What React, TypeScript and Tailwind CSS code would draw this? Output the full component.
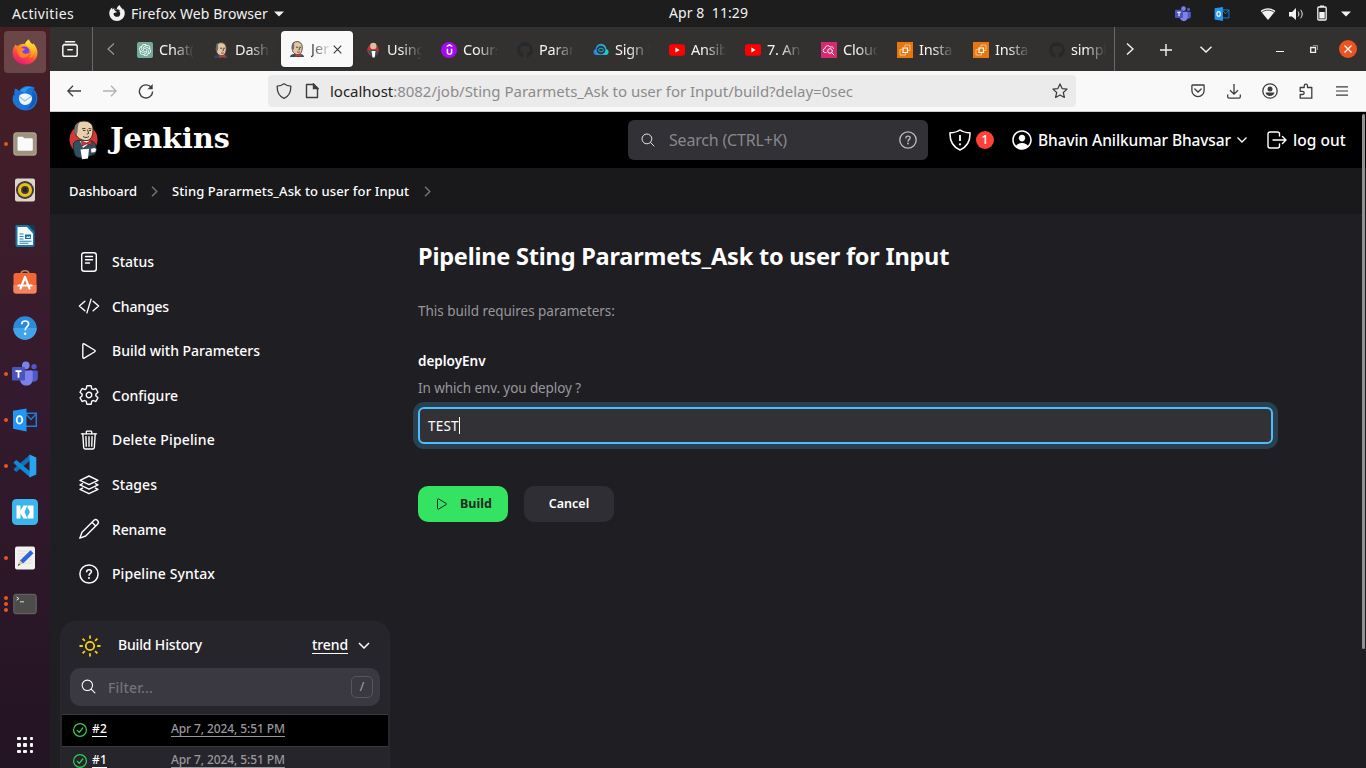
import type { ReactNode } from "react";
import { FaGithub } from "react-icons/fa";
import { SiOpenai, SiUdemy, SiFirefoxbrowser } from "react-icons/si";
import {
  IoCodeSlashOutline,
  IoPlayOutline,
  IoSettingsOutline,
  IoTrashOutline,
  IoPersonCircleOutline,
  IoSearchOutline,
} from "react-icons/io5";

/* ---------- shared drawings ---------- */

function JenkinsHead() {
  return (
    <svg viewBox="0 0 16 16" className="size-4 shrink-0">
      <path d="M1 16c0-2 2-3 4-3h6c2 0 4 1 4 3z" fill="#2f4a5c" />
      <path d="M3.200 5C3.400 2 5.600.6 8.200.6s4.800 1.800 5 5c.2 3.600-.8 7.600-4 8.100C6 14 3.600 11.500 3.300 8.500z" fill="#e3c6a4" stroke="#4a3a33" strokeWidth=".9" />
      <path d="M3 4.500C3 2.500 4 1.300 5.500.8c-.6 2-.3 3.800-.3 5.700L4.500 9 2.500 7.500z" fill="#6d6b6d" />
      <path d="M7 6.200h2M10.200 6.200H12M10 6.500l.6 2-1.200.4M8 10.800c1 .6 2 .5 2.800 0" stroke="#4a3a33" strokeWidth=".9" fill="none" />
      <path d="M6.500 12.800l2.800 1.200 3-1.400v3.200l-3-1-2.800 1.100z" fill="#d33833" />
    </svg>
  );
}

function JenkinsLogo() {
  return (
    <svg viewBox="0 0 30 40" className="h-10 w-[30px] shrink-0">
      <ellipse cx="14.500" cy="19.500" rx="14" ry="14.500" fill="#d33833" />
      <path d="M4.500 23c2-2.500 5-3 8-2.500l6 1c4-1 7 0 8 3l1 5-2 5-11 3.500c-3 0-6-.5-8-2C4.500 32 4 27 4.500 23z" fill="#335061" stroke="#16242d" strokeWidth=".8" />
      <path d="M11 21l3 7 4-3 3-4-3-.5z" fill="#f4f4f4" />
      <path d="M6 9C6 4 10 1 15 1s9 3 9 8-.8 10.500-6 11.500C12.500 21 7 17.500 6 12z" fill="#e9cfae" stroke="#2b211d" strokeWidth=".9" />
      <path d="M5.500 9C5.500 5 8 3 10.500 2 8.500 5 9 8 8.500 12L7.500 15.500 5 12z" fill="#77706c" />
      <path d="M13 8.800l3.500-.4M19.500 8.500l3 .4M18.500 9.500l1.200 4-2 .6M14 16.500c2 1.300 4 1.300 6 0M14 10.500h2.500M20 10.500h2" stroke="#3a2a22" strokeWidth=".9" fill="none" />
      <path d="M12.500 21l5 2 5-2.500.5 5-5-1.800-5 2.300z" fill="#d33833" stroke="#5c1310" strokeWidth=".6" />
      <path d="M11.500 29.500l8.500-.8-1 9.800-5.900.7z" fill="#fff" />
      <path d="M21.500 28.500l4.500-1 1.500 2-1 3-4.500.5z" fill="#fff" stroke="#222" strokeWidth=".6" />
    </svg>
  );
}

function Teams({ className }: { className: string }) {
  return (
    <svg viewBox="0 0 26 26" className={className}>
      <circle cx="22" cy="5.600" r="2.700" fill="#5059c9" />
      <path d="M17 9.500h7.500c.8 0 1.300.6 1.300 1.300v6c0 2.400-1.800 4-4 4-2 0-3.800-1.300-4.300-3.200z" fill="#5059c9" />
      <circle cx="13.800" cy="4.400" r="3.800" fill="#7b83eb" />
      <path d="M8 9.500h11.300c.8 0 1.400.6 1.400 1.400v7.500c0 3.500-2.900 6.200-6.300 6.200S8 21.900 8 18.400z" fill="#7b83eb" />
      <rect x="0" y="6" width="13" height="13.500" rx="1.200" fill="#4b53bc" />
      <path d="M3.500 9.200h6v1.700H7.400v5.800H5.600v-5.800H3.500z" fill="#fff" />
    </svg>
  );
}

function Outlook({ className }: { className: string }) {
  return (
    <svg viewBox="0 0 26 26" className={className}>
      <path d="M13 6.300h11.300v13H13" fill="none" stroke="#1b7fdc" strokeWidth="1.500" />
      <path d="M14 7l5 5.500L24.500 6.500" fill="none" stroke="#1b7fdc" strokeWidth="1.500" />
      <path d="M1 3.800L14.500 1.500v23L1 21.800z" fill="#2196f3" />
      <ellipse cx="7.500" cy="12.900" rx="2.800" ry="3.700" fill="none" stroke="#fff" strokeWidth="1.800" />
    </svg>
  );
}

/* ---------- top panel ---------- */

function TopPanel() {
  return (
    <header className="flex h-[27px] shrink-0 items-center bg-[#1d1d1d] text-[14px] leading-[27px] text-[#f2f2f2]">
      <div className="flex w-[643px] items-center pl-3">
        <span className="w-[97px] tracking-[0.37px]">Activities</span>
        <SiFirefoxbrowser className="mb-px size-4 shrink-0" />
        <span className="ml-[6px] tracking-[0.08px]">Firefox Web Browser</span>
        <svg viewBox="0 0 10 6" className="ml-[6px] h-[6px] w-[10px]"><path d="M0 .5h10L5 5.500z" fill="currentColor" /></svg>
      </div>
      <span className="mb-[2px] whitespace-pre pl-[26px] tracking-[0.08px]">Apr 8{"  "}11:29</span>
      <div className="ml-auto flex items-center pr-[15px]">
        <Teams className="mr-[23px] size-4" />
        <Outlook className="mr-[30px] size-4" />
        <svg viewBox="0 0 16 14" className="mr-[12px] h-[14px] w-4"><path d="M.6 4C4.800.4 11.200.4 15.400 4L8 13z" fill="currentColor" /><path d="M1.800 5.300C5.500 2.400 10.500 2.400 14.200 5.300" stroke="#1d1d1d" strokeWidth=".8" fill="none" /></svg>
        <svg viewBox="0 0 16 14" className="mr-[12px] h-[14px] w-4"><path d="M1 5h3l4-4v12L4 9.500H1z" fill="currentColor" /><path d="M10 4.500c1.200 1.500 1.200 3.500 0 5M12.500 2.800c2.200 2.500 2.200 6 0 8.500" stroke="currentColor" strokeWidth="1" fill="none" /></svg>
        <svg viewBox="0 0 12 16" className="mr-[13px] mb-px h-4 w-3"><path d="M4 .5h4V2H4z" fill="currentColor" /><rect x="1.800" y="2" width="8.400" height="13" rx="1" fill="none" stroke="currentColor" strokeWidth="1.300" /><path d="M3.300 7h5.400v6.500H3.300z" fill="currentColor" /></svg>
        <svg viewBox="0 0 10 6" className="h-[6px] w-[10px]"><path d="M0 .5h10L5 5.500z" fill="currentColor" /></svg>
      </div>
    </header>
  );
}

/* ---------- dock ---------- */

function FirefoxIcon() {
  return (
    <svg viewBox="0 0 26 26" className="size-[26px]">
      <defs>
        <linearGradient id="ff" x1=".8" y1="0" x2=".3" y2="1">
          <stop offset="0" stopColor="#fff44f" /><stop offset=".35" stopColor="#ffa21f" /><stop offset=".65" stopColor="#ff4a3d" /><stop offset="1" stopColor="#e31587" />
        </linearGradient>
        <linearGradient id="fy" x1="0" y1="0" x2="0" y2="1"><stop offset="0" stopColor="#ffee3a" /><stop offset="1" stopColor="#ff8a16" /></linearGradient>
      </defs>
      <path d="M3.500 5.500c.8 1 1.600 1.300 2.500 1.400C8 5.200 11 4.500 13 5c.8-2.200 2.500-3.800 4-4.500.2 2.200 1.500 3 3.500 5 .4-.3.500-1 .4-1.500 3 3 4.600 6.500 4.600 9.700C25.500 20.600 20 25.500 13 25.500S.5 20 .5 13.500c0-3 1.300-6 3-8z" fill="url(#ff)" />
      <path d="M17 .5c.2 2.200 1.500 3 3.500 5 2.500 2.800 3 7 1.500 10-1.500 2.700-4 3.500-5 3.500 3-3 3-7.500.5-10-1.200-1.300-3-2.800-4.500-4 .8-2.200 2.500-3.800 4-4.500z" fill="url(#fy)" />
      <circle cx="12.500" cy="12.500" r="5" fill="#7542e5" />
      <path d="M5.500 9c1.500-1.500 4-.8 5 .3l2.500.5c-.3 1.600-1.700 1.800-2.700 2.300 0 2 1.700 3 3.800 2.700 1.700-.3 2.600-1 3.400-1-1 4-4.500 5.500-7.500 4.700C6.500 17.500 4.500 13 5.500 9z" fill="#ff8426" />
    </svg>
  );
}

function ThunderbirdIcon() {
  return (
    <svg viewBox="0 0 26 26" className="size-[26px]">
      <path d="M3 3.500c2 .5 3 1.300 4 2.500 3-4.500 8-6 12.500-4.500 2 .2 3 1 3.500 2-1 0-1.500.3-1.500.8 3.500 3 4.500 8 3.500 12C23.500 22.500 18.500 25.500 13.500 25.500S2 21.500.8 16C.3 13 1 10.500 1.500 9c0 1 .5 1.500 1 1.800C2.200 8.500 2.200 6.500 3 3.500z" fill="#1a73d9" />
      <path d="M8 6c3-4 8-5 12-3.500-4 .3-6 2.500-7 5z" fill="#2f97ee" />
      <path d="M20 5.500c4 3 5 7 3.500 11-1 4-5 7-9.500 7.500 6-3 8-11 6-18.500z" fill="#0b3f9c" opacity=".5" />
      <path d="M7 12c0-2 3-3.500 6-3.500s7 1.500 7 4.500c0 4-3 7-7 7s-6.500-4-6-8z" fill="#eef5fb" />
      <path d="M7.300 11.500l5.500 4.500 6.500-4.500" fill="none" stroke="#9dc1e4" strokeWidth="1.200" />
    </svg>
  );
}

const dock: { dots: number; active?: boolean; icon: ReactNode }[] = [
  { dots: 1, active: true, icon: <FirefoxIcon /> },
  { dots: 0, icon: <ThunderbirdIcon /> },
  {
    dots: 1,
    icon: <svg viewBox="0 0 24 24" className="size-6"><rect x=".5" y=".5" width="23" height="23" rx="2.500" fill="#9d937f" /><rect x=".9" y=".9" width="22.200" height="22.200" rx="2.200" fill="none" stroke="#b8af9d" strokeWidth=".8" /><path d="M4.500 6c0-.8.5-1.300 1.300-1.300h4l1.500 1.500h7.200c.8 0 1.300.5 1.300 1.300v10c0 .8-.5 1.300-1.300 1.300H5.800c-.8 0-1.300-.5-1.300-1.300z" fill="#fafafa" /></svg>,
  },
  {
    dots: 0,
    icon: <svg viewBox="0 0 24 24" className="size-6"><rect x="2" y=".5" width="20" height="23" rx="2" fill="#dcd5c9" /><circle cx="12" cy="12" r="9" fill="#3d3a38" /><circle cx="12" cy="12" r="5.500" fill="none" stroke="#e9bd1e" strokeWidth="3.200" /><circle cx="12" cy="12" r="2.200" fill="#272523" /></svg>,
  },
  {
    dots: 0,
    icon: <svg viewBox="0 0 24 24" className="size-6"><path d="M3.500 1H17l4.500 4.500V21a2 2 0 0 1-2 2h-15a2 2 0 0 1-2-2V2a1 1 0 0 1 1-1z" fill="#1876a8" /><path d="M4.500 3H14l6 6.500V21h-15.500z" fill="#f5fafc" /><path d="M15 1h6.500v7z" fill="#0c3f5c" /><path d="M6.500 10h4M6.500 12.500h4M6.500 15h4M6.500 17.200h12M6.500 19.300h9" stroke="#2183b5" strokeWidth="1.100" /><path d="M12 10.500h6v4.500H12z" fill="#1d6c98" /><path d="M13 14l1.500-2 1.200 1 1-1 .8 2z" fill="#d9edf7" /></svg>,
  },
  {
    dots: 0,
    icon: <svg viewBox="0 0 24 24" className="size-6"><path d="M8 4.500C8 2 9.500.8 12 .8s4 1.200 4 3.700" fill="none" stroke="#b78b68" strokeWidth="1.500" /><rect x=".5" y="3" width="23" height="20.500" rx="2.500" fill="#f26534" /><path d="M.5 15h23v6a2.500 2.500 0 0 1-2.500 2.500H3A2.500 2.500 0 0 1 .5 21z" fill="#f3835c" /><path d="M7.500 18.500L12 7l4.500 11.500M5.500 15.500h13" fill="none" stroke="#fff" strokeWidth="2.200" strokeLinejoin="round" strokeLinecap="round" /></svg>,
  },
  {
    dots: 0,
    icon: <svg viewBox="0 0 24 24" className="size-6"><circle cx="12" cy="12" r="11.700" fill="#2a8bdc" /><path d="M.3 12h23.400a11.700 11.700 0 0 1-23.400 0z" fill="#42a3e8" /><path d="M8.700 8.200C8.800 6.200 10.200 5 12.200 5s3.400 1.200 3.400 3c0 2.600-3.400 2.900-3.400 6.200" fill="none" stroke="#fff" strokeWidth="1.700" /><circle cx="12.100" cy="17.800" r="1.300" fill="#fff" /></svg>,
  },
  { dots: 1, icon: <Teams className="size-[26px]" /> },
  { dots: 1, icon: <Outlook className="size-[26px]" /> },
  {
    dots: 1,
    icon: <svg viewBox="0 0 24 24" className="size-6"><path d="M17 .8v6L3.300 18 .8 16V14.800z" fill="#0f72b8" /><path d="M17 23.200v-6L3.300 6 .8 8v1.200z" fill="#0f8ad6" /><path d="M16.500.6L23.300 3.500v17l-6.800 2.900z" fill="#2ba4ee" /></svg>,
  },
  {
    dots: 0,
    icon: <svg viewBox="0 0 26 26" className="size-[26px]"><rect width="26" height="26" rx="4.500" fill="#3bb5ea" /><path d="M4.500 6.500h4v5l3-5h4l-3 6.500 3 6.500h-4l-3-5v5h-4z" fill="#fff" /><path d="M16 6.500h5.500v13H16l-.8-1.500 2.800-5-2.800-5z" fill="#fff" /></svg>,
  },
  {
    dots: 1,
    icon: <svg viewBox="0 0 24 24" className="size-6"><rect x="2" y=".5" width="20" height="23" rx="2" fill="#f1f1f0" /><path d="M5 5h14M5 8h14M5 11h14M5 14h14M5 17h14" stroke="#dcdcdc" strokeWidth=".8" /><path d="M17.500 4.300l3 3L10 17.600l-3-3z" fill="#2f63dc" /><path d="M7 14.600l3 3-5.200 2.300z" fill="#e9c08c" /><path d="M4.800 19.900l1-2.300 1.200 1.200z" fill="#333" /></svg>,
  },
  {
    dots: 3,
    icon: <svg viewBox="0 0 24 24" className="size-6"><rect x=".8" y="2.300" width="22.400" height="19.400" rx="2" fill="#4c4c4b" stroke="#6a6a68" /><path d="M3.500 5l2.500 1.600-2.500 1.600M7 9.800h4" fill="none" stroke="#ddd" strokeWidth="1" /></svg>,
  },
];

function Dock() {
  return (
    <nav className="flex w-[50px] shrink-0 flex-col bg-linear-to-b from-[#471f25] via-[#341a2e] via-50% to-[#231423] pt-[2px]">
      {dock.map((d, i) => (
        <div key={i} className="flex h-[46px] items-center">
          <div className="flex w-[4px] flex-col items-end gap-[2px] overflow-visible">
            {Array.from({ length: d.dots }, (_, k) => (
              <span key={k} className="-mr-[4px] size-1 shrink-0 rounded-full bg-[#e95420]" />
            ))}
          </div>
          <div className={d.active ? "flex size-[42px] items-center justify-center rounded-[4px] bg-[#6b4649]" : "flex size-[42px] items-center justify-center"}>
            {d.icon}
          </div>
        </div>
      ))}
      <div className="mt-auto mb-[15px] ml-[17px] grid w-4 grid-cols-3 gap-[3px]">
        {Array.from({ length: 9 }, (_, k) => (
          <span key={k} className="size-[3.500px] rounded-[1px] bg-[#f5f5f5]" />
        ))}
      </div>
    </nav>
  );
}

/* ---------- browser chrome ---------- */

const githubIcon = <FaGithub className="size-4 shrink-0 text-[#24292e]" />;
const youtubeIcon = (
  <svg viewBox="0 0 16 16" className="size-4 shrink-0"><rect y="2.300" width="16" height="11.400" rx="2.600" fill="#f00" /><path d="M6.400 5.600v4.800L10.600 8z" fill="#fff" /></svg>
);
const ec2Icon = (
  <svg viewBox="0 0 16 16" className="size-4 shrink-0"><path d="M0 0h16v16H0z" fill="#e8760f" /><path d="M6 6h4.500v4.500H6z" fill="none" stroke="#fff" strokeWidth="1.200" /><path d="M5 7.500H3v5.500h5.500v-2M8 5V3h5v5.500h-2" fill="none" stroke="#fbd3a5" strokeWidth=".8" /></svg>
);

const tabs: { label: string; icon: ReactNode }[] = [
  { label: "Chat(", icon: <span className="flex size-4 shrink-0 items-center justify-center rounded-[2px] bg-[#74aa9c]"><SiOpenai className="size-3 text-white" /></span> },
  { label: "Dash", icon: <JenkinsHead /> },
  { label: "Jer", icon: <JenkinsHead /> },
  {
    label: "Using",
    icon: <svg viewBox="0 0 16 16" className="size-4 shrink-0"><ellipse cx="8" cy="8" rx="5.800" ry="6" fill="#c9302c" /><path d="M3 8.500l4-.5 5 .5 1 4-3 2H6z" fill="#335061" /><circle cx="8.300" cy="4" r="3.200" fill="#d9bfa3" /><path d="M6.500 9h4l-.8 6.500H7.500z" fill="#fff" /></svg>,
  },
  { label: "Cours", icon: <span className="flex size-4 shrink-0 items-center justify-center rounded-full bg-[#a908f2]"><SiUdemy className="size-[11px] text-white" /></span> },
  { label: "Param", icon: githubIcon },
  {
    label: "Sign I",
    icon: <svg viewBox="0 0 16 16" className="size-4 shrink-0"><defs><linearGradient id="cl"><stop stopColor="#2b7de0" /><stop offset="1" stopColor="#1fd3c9" /></linearGradient></defs><path d="M3 13a3 3 0 0 1-.3-5.900 5.300 5.300 0 0 1 10.600 0A3 3 0 0 1 13 13z" fill="url(#cl)" /><circle cx="8" cy="8" r="4.300" fill="#263746" /><ellipse cx="8" cy="8" rx="2.400" ry="1.800" fill="none" stroke="#27b5c9" strokeWidth=".9" /></svg>,
  },
  { label: "Ansib", icon: youtubeIcon },
  { label: "7. An", icon: youtubeIcon },
  {
    label: "Cloud",
    icon: <svg viewBox="0 0 16 16" className="size-4 shrink-0"><path d="M0 0h16v16H0z" fill="#d62a70" /><path d="M5.500 10.500H4.300a2 2 0 0 1-.3-4 2.800 2.800 0 0 1 5.300-1.300 2 2 0 0 1 3.200 1.600" fill="none" stroke="#fff" strokeWidth=".9" /><circle cx="9" cy="9" r="2.300" fill="none" stroke="#fff" strokeWidth="1" /><path d="M10.700 10.700l2.500 2.500" stroke="#fff" /></svg>,
  },
  { label: "Insta", icon: ec2Icon },
  { label: "Insta", icon: ec2Icon },
  { label: "simpl", icon: githubIcon },
];

function TabBar() {
  return (
    <div className="flex h-11 shrink-0 items-center bg-[#333030] text-[14.500px] text-[#f4f4f4]">
      <div className="flex h-full w-[43px] items-center border-r border-[#6a6868] pl-[12px]">
        <svg viewBox="0 0 16 16" className="size-4" fill="none" stroke="currentColor" strokeWidth="1.500"><path d="M3.500.8h9" strokeLinecap="round" /><path d="M1.500 3.500h13" /><rect x=".8" y="3.800" width="14.400" height="11.400" rx="1.800" /><path d="M5.800 8.800h4.400" strokeLinecap="round" /></svg>
      </div>
      <div className="flex h-full w-9 items-center pl-[14px] text-[#9a9898]">
        <svg viewBox="0 0 8 12" className="h-3 w-2" fill="none" stroke="currentColor" strokeWidth="1.200"><path d="M7 .5L1 6l6 5.500" /></svg>
      </div>
      <div className="flex gap-1">
        {tabs.map((t, i) =>
          i === 2 ? (
            <div key={i} className="flex h-9 w-[72px] items-center rounded-[4px] bg-[#f9f9f9] pl-2 text-[#333] shadow">
              {t.icon}
              <span className="ml-[6px] w-[18px] overflow-hidden whitespace-nowrap mask-r-from-0% mask-r-to-110%">{t.label}</span>
              <svg viewBox="0 0 10 10" className="ml-[4px] size-[9px]" stroke="#333" strokeWidth="1.200"><path d="M.8.8l8.400 8.400M9.200.8L.8 9.200" /></svg>
            </div>
          ) : (
            <div key={i} className="flex h-9 w-[72px] items-center pt-px pl-2">
              {t.icon}
              <span className="ml-[6px] w-[35px] overflow-hidden whitespace-nowrap tracking-[-0.2px] mask-r-from-40% mask-r-to-100%">{t.label}</span>
            </div>
          ),
        )}
      </div>
      <div className="ml-px flex h-full flex-1 items-center border-l border-[#6a6868] pl-[11px]">
        <svg viewBox="0 0 8 12" className="h-3 w-2" fill="none" stroke="currentColor" strokeWidth="1.400"><path d="M1 .5L7 6l-6 5.500" /></svg>
        <svg viewBox="0 0 12 12" className="mt-px ml-[26px] size-3" stroke="currentColor" strokeWidth="1.400"><path d="M6 0v12M0 6h12" /></svg>
        <svg viewBox="0 0 12 7" className="ml-[28px] h-[7px] w-3" fill="none" stroke="currentColor" strokeWidth="1.400"><path d="M.5.7L6 6 11.500.7" /></svg>
        <span className="mt-[5px] ml-[64px] h-[1.500px] w-2 bg-[#f4f4f4]" />
        <svg viewBox="0 0 8 8" className="ml-[26px] size-2" fill="none" stroke="currentColor"><path d="M.7 2.500h4.800v4.800H.7z" strokeWidth="1.300" /><path d="M3 .5h4.500V5" strokeWidth=".8" opacity=".6" /></svg>
        <span className="ml-[21px] flex size-[18px] items-center justify-center rounded-full bg-[#e95420]">
          <svg viewBox="0 0 8 8" className="size-2" stroke="#fff" strokeWidth="1.200"><path d="M.5.5l7 7M7.500.5l-7 7" /></svg>
        </span>
      </div>
    </div>
  );
}

function UrlBar() {
  return (
    <div className="flex h-[41px] shrink-0 items-center border-b border-[#ccc] bg-[#f9f9f9] text-[#3d3c3f]">
      <svg viewBox="0 0 14 12" className="ml-[17px] h-3 w-[14px]" fill="none" stroke="currentColor" strokeWidth="1.300"><path d="M14 6H1M6 .7L.8 6 6 11.300" /></svg>
      <svg viewBox="0 0 14 12" className="ml-[22px] h-3 w-[14px] text-[#b0b0b0]" fill="none" stroke="currentColor" strokeWidth="1.300"><path d="M0 6h13M8 .7L13.200 6 8 11.300" /></svg>
      <svg viewBox="0 0 16 16" className="ml-[21px] size-4" fill="none" stroke="currentColor" strokeWidth="1.400"><path d="M13.300 4.500A6.600 6.600 0 1 0 14.600 8.500" /><path d="M14.700 1v5.200H9.500z" fill="currentColor" stroke="none" /></svg>
      <div className="ml-[114px] flex h-8 w-[808px] items-center rounded-[4px] bg-[#ebebeb]">
        <svg viewBox="0 0 16 16" className="ml-2 size-4" fill="none" stroke="currentColor" strokeWidth="1.300"><path d="M8 .8c2 1.500 4 2.300 6.800 2.400C15 9 12.500 13.500 8 15.300 3.500 13.500 1 9 1.200 3.200 4 3.100 6 2.300 8 .8z" strokeLinejoin="round" /></svg>
        <svg viewBox="0 0 14 16" className="ml-[13px] h-4 w-[14px]" fill="none" stroke="currentColor" strokeWidth="1.400"><path d="M1.500 1.500h7l4 4v9h-11z" strokeLinejoin="round" /><path d="M8.500 1v4.500H13z" fill="currentColor" /></svg>
        <span className="ml-[11px] whitespace-nowrap text-[15px] tracking-[-0.021px] text-[#8b8b8b]">
          <span className="text-[#222]">localhost</span>:8082/job/Sting Pararmets_Ask to user for Input/build?delay=0sec
        </span>
        <svg viewBox="0 0 16 16" className="mr-2 ml-auto size-4" fill="none" stroke="currentColor" strokeWidth="1.200" strokeLinejoin="round"><path d="M8 .9l2.100 4.700 5 .5-3.800 3.400 1.100 5L8 12l-4.400 2.500 1.100-5L.9 6.100l5-.5z" /></svg>
      </div>
      <svg viewBox="0 0 14 14" className="ml-[115px] size-[14px]" fill="none" stroke="currentColor" strokeWidth="1.300"><path d="M1.500 1h11c.3 0 .6.3.6.6V6.500a6.100 6.100 0 0 1-12.200 0V1.600c0-.3.3-.6.6-.6z" /><path d="M3.800 5L7 8l3.200-3" strokeLinecap="round" /></svg>
      <svg viewBox="0 0 14 15" className="ml-[22px] h-[15px] w-[14px]" fill="none" stroke="currentColor" strokeWidth="1.300"><path d="M7 0v10M3 6.300L7 10.200l4-3.900M.7 10.500v2.200c0 .8.500 1.400 1.400 1.400h9.800c.9 0 1.400-.6 1.400-1.400v-2.200" /></svg>
      <svg viewBox="0 0 16 16" className="ml-[21px] size-4" fill="none" stroke="currentColor" strokeWidth="1.300"><circle cx="8" cy="8" r="7.200" /><circle cx="8" cy="5.900" r="2.500" fill="currentColor" stroke="none" /><path d="M3.500 9.500h9c-.4 2-2.300 3.500-4.500 3.500s-4.100-1.500-4.500-3.500z" fill="currentColor" stroke="none" /></svg>
      <svg viewBox="0 0 14 16" className="ml-[21px] h-4 w-[14px]" fill="none" stroke="currentColor" strokeWidth="1.300" strokeLinejoin="round"><path d="M1.200 15.200V11.500h2.300c2.200 0 2.200-3.200 0-3.200H1.200V4.500h4V3c0-2.400 3.300-2.400 3.300 0v1.500h4.300v10.700z" /></svg>
      <svg viewBox="0 0 12 10" className="ml-[23px] h-[10px] w-3" stroke="currentColor" strokeWidth="1.200"><path d="M0 .8h12M0 5h12M0 9.200h12" /></svg>
    </div>
  );
}

/* ---------- Jenkins page ---------- */

function HelpCircle({ className }: { className: string }) {
  return (
    <svg viewBox="0 0 20 20" className={className} fill="none" stroke="currentColor" strokeWidth="1.500">
      <circle cx="10" cy="10" r="9.100" />
      <path d="M7.700 7.700C7.700 6.400 8.700 5.700 10.100 5.700s2.300.8 2.300 2c0 1.600-2.300 1.700-2.300 3.600" strokeLinecap="round" />
      <circle cx="10" cy="13.900" r="1" fill="currentColor" stroke="none" />
    </svg>
  );
}

function JenkinsHeader() {
  return (
    <div className="flex h-14 shrink-0 items-center bg-black">
      <div className="ml-[19px] flex w-[559px] items-center">
        <JenkinsLogo />
        <span className="mb-[3px] ml-[11px] font-['DejaVu_Serif',serif] text-[28.500px] leading-none font-bold">Jenkins</span>
      </div>
      <div className="flex h-10 w-[300px] items-center rounded-[6px] bg-[#323136] px-[12px] text-[#88878c]">
        <IoSearchOutline className="size-4 text-[#e4e4e6]" />
        <span className="ml-[13px] text-[16px] tracking-[-0.19px]">Search (CTRL+K)</span>
        <HelpCircle className="-mr-px ml-auto size-[18px] text-[#b9b9bd]" />
      </div>
      <svg viewBox="0 0 22 22" className="ml-[21px] size-[22px]" fill="none" stroke="currentColor" strokeWidth="1.500" strokeLinejoin="round"><path d="M11 1c2.500 1.800 6 2.700 10 2.800C21.300 12 18 18 11 21 4 18 .7 12 1 3.800 5 3.700 8.500 2.800 11 1z" /><path d="M11 6v6" strokeWidth="1.800" /><circle cx="11" cy="15.300" r="1.100" fill="currentColor" stroke="none" /></svg>
      <span className="ml-[5px] flex size-[18px] items-center justify-center rounded-full bg-[#ff4137] text-[12px] font-medium">1</span>
      <IoPersonCircleOutline className="ml-4 size-6" />
      <span className="mt-px ml-[4px] text-[15.500px] font-medium tracking-[-0.1px] whitespace-nowrap">Bhavin Anilkumar Bhavsar</span>
      <svg viewBox="0 0 10 6" className="ml-[6px] h-[6px] w-[10px]" fill="none" stroke="currentColor" strokeWidth="1.300"><path d="M.5.5L5 5 9.500.5" /></svg>
      <svg viewBox="0 0 20 18" className="ml-5 h-[18px] w-5" fill="none" stroke="currentColor" strokeWidth="1.400" strokeLinecap="round" strokeLinejoin="round"><path d="M12.500 5V3c0-1.200-.8-2-2-2H3C1.800 1 1 1.800 1 3v12c0 1.200.8 2 2 2h7.500c1.200 0 2-.8 2-2v-2M6 9h13M15.500 5.500L19 9l-3.500 3.500" /></svg>
      <span className="mt-px ml-[6px] text-[15.500px] font-medium tracking-[0.04px] whitespace-nowrap">log out</span>
    </div>
  );
}

function Crumb() {
  return <svg viewBox="0 0 7 12" className="h-[11px] w-[7px]" fill="none" stroke="#77767a" strokeWidth="1.500"><path d="M.8.8L6 6 .8 11.200" /></svg>;
}

const menu: { label: string; track: string; icon: ReactNode }[] = [
  {
    label: "Status", track: "tracking-normal",
    icon: <svg viewBox="0 0 24 24" className="size-6" fill="none" stroke="currentColor" strokeWidth="1.400" strokeLinecap="round"><rect x="4.700" y="2.700" width="14.600" height="18.600" rx="2.500" /><path d="M8.500 6.500h7M8.500 9.700h7M8.500 13h4" /></svg>,
  },
  { label: "Changes", track: "tracking-[-0.14px]", icon: <IoCodeSlashOutline className="size-[22px]" /> },
  { label: "Build with Parameters", track: "tracking-[-0.01px]", icon: <IoPlayOutline className="size-[22px]" /> },
  { label: "Configure", track: "tracking-[-0.01px]", icon: <IoSettingsOutline className="size-[22px]" /> },
  { label: "Delete Pipeline", track: "tracking-[0.16px]", icon: <IoTrashOutline className="size-[22px]" /> },
  {
    label: "Stages", track: "tracking-[0.07px]",
    icon: <svg viewBox="0 0 24 24" className="size-6" fill="none" stroke="currentColor" strokeWidth="1.400" strokeLinejoin="round"><path d="M12 3l9 4.300-9 4.300-9-4.300z" /><path d="M6 10.300L3 11.900l9 4.300 9-4.300-3-1.600" /><path d="M6 14.800l-3 1.600 9 4.300 9-4.300-3-1.600" /></svg>,
  },
  {
    label: "Rename", track: "tracking-[-0.16px]",
    icon: <svg viewBox="0 0 24 24" className="size-6" fill="none" stroke="currentColor" strokeWidth="1.400" strokeLinejoin="round"><path d="M2.800 21.200L5 15.300 16.800 3.500a2.600 2.600 0 0 1 3.700 3.700L8.700 19z" /><path d="M15 5.300L18.700 9" /></svg>,
  },
  { label: "Pipeline Syntax", track: "tracking-[0.07px]", icon: <HelpCircle className="size-5" /> },
];

function BuildRow({ n, dark }: { n: string; dark?: boolean }) {
  return (
    <div className={dark ? "flex h-8 items-center border-t border-[#3a393f] bg-black pb-[2px] pl-[11px]" : "flex h-[31px] items-center border-t border-[#3a393f] pb-[4px] pl-[11px]"}>
      <svg viewBox="0 0 14 14" className="mt-[2px] size-[14px]" fill="none" stroke="#30d158" strokeWidth="1.200"><circle cx="7" cy="7" r="6.400" /><path d="M4.300 7.300l1.900 2L9.800 5" strokeLinecap="round" strokeLinejoin="round" /></svg>
      <span className="ml-[5px] flex w-[79px] text-[12px] font-medium tracking-[0.18px] text-white"><span className="border-b border-white leading-[15px]">{n}</span></span>
      <span className="border-b border-[#98979c] text-[12px] leading-[15px] font-medium tracking-[-0.1px] text-[#98979c]">Apr 7, 2024, 5:51 PM</span>
    </div>
  );
}

function Sidebar() {
  return (
    <aside className="flex w-[340px] shrink-0 flex-col pl-[10px]">
      <ul className="pt-[25.300px] pl-[17px]">
        {menu.map((m) => (
          <li key={m.label} className="flex h-[44.600px] items-center text-[14px] font-medium">
            <span className="flex w-6 justify-center">{m.icon}</span>
            <span className={`ml-[11px] ${m.track}`}>{m.label}</span>
          </li>
        ))}
      </ul>
      <section className="mt-[24.700px] h-[148px] shrink-0 overflow-hidden rounded-t-[16px] border border-b-0 border-[#29282d] bg-[#26252b]">
        <div className="flex h-[46px] items-center pl-[18px] text-[14px] font-medium">
          <svg viewBox="0 0 22 22" className="mt-[2px] size-[22px]" fill="none" stroke="#fbd00b" strokeWidth="1.800"><circle cx="11" cy="11" r="4.200" /><path d="M11 .5v3.300M11 18.200v3.300M.5 11h3.300M18.200 11h3.300M3.600 3.600l2.300 2.300M16.100 16.100l2.300 2.300M3.600 18.400l2.300-2.300M16.100 5.900l2.300-2.300" /></svg>
          <span className="ml-[17px] w-[194px] tracking-[-0.16px]">Build History</span>
          <span className="mt-[2px] border-b border-white leading-[16px] tracking-[-0.1px]">trend</span>
          <svg viewBox="0 0 12 7" className="mt-px ml-[10px] h-[7px] w-3" fill="none" stroke="currentColor" strokeWidth="1.500"><path d="M1 1l5 5 5-5" /></svg>
        </div>
        <div className="mx-[9px] flex h-[38px] items-center rounded-[10px] bg-[#3a3942] pr-[7px] pl-[10px]">
          <IoSearchOutline className="size-[17px]" />
          <span className="mt-px ml-[11px] text-[14px] font-medium tracking-[0.17px] text-[#737278]">Filter...</span>
          <span className="ml-auto flex h-[22px] w-[22px] items-center justify-center rounded-[5px] border border-[#57565e] text-[12px] text-[#a9a8ae]">/</span>
        </div>
        <div className="mx-px mt-[8px]">
          <BuildRow n="#2" dark />
          <BuildRow n="#1" />
        </div>
      </section>
    </aside>
  );
}

function BuildForm() {
  return (
    <main className="flex flex-col pl-7">
      <h1 className="mt-[26px] text-[23.500px] leading-8 font-bold tracking-[-0.21px]">Pipeline Sting Pararmets_Ask to user for Input</h1>
      <p className="mt-[29px] text-[13.500px] leading-5 tracking-[-0.03px] text-[#98979c]">This build requires parameters:</p>
      <label className="mt-[30px] text-[13.500px] leading-5 font-semibold">deployEnv</label>
      <p className="mt-[7px] text-[13.500px] leading-5 tracking-[-0.09px] text-[#98979c]">In which env. you deploy ?</p>
      <div className="mt-[9px] flex h-[37px] w-[855px] items-center rounded-[6px] border-2 border-[#4ebdfb] bg-[#323136] pl-2 ring-[5px] ring-[#294050]">
        <span className="mt-[2px] text-[13.500px] tracking-[0.2px]">TEST</span>
        <span className="h-[17px] w-px bg-white" />
      </div>
      <div className="mt-[42px] flex gap-4 text-[12.500px]">
        <button className="flex h-9 w-[90px] items-center rounded-[10px] bg-[#34e362] pl-[16px] font-bold text-[#1f2a24]">
          <IoPlayOutline className="size-4" />
          <span className="mt-px ml-[10px]">Build</span>
        </button>
        <button className="h-9 w-[90px] rounded-[10px] bg-[#2f2e34] pt-px font-semibold">Cancel</button>
      </div>
    </main>
  );
}

export default function App() {
  return (
    <div className="flex h-[768px] w-[1366px] flex-col overflow-hidden bg-[#1f1e23] font-['Noto_Sans','Open_Sans',sans-serif] text-white">
      <TopPanel />
      <div className="flex min-h-0 flex-1">
        <Dock />
        <div className="flex w-[1316px] flex-col">
          <TabBar />
          <UrlBar />
          <div className="relative flex min-h-0 flex-1 flex-col">
            <JenkinsHeader />
            <div className="flex h-[46px] shrink-0 items-center bg-[#19191b] pt-px pl-[19px] text-[13px] font-medium">
              <span className="tracking-[-0.02px]">Dashboard</span>
              <span className="mx-[14px]"><Crumb /></span>
              <span className="mr-[15px] tracking-[0.1px]">Sting Pararmets_Ask to user for Input</span>
              <Crumb />
            </div>
            <div className="flex min-h-0 flex-1">
              <Sidebar />
              <BuildForm />
            </div>
            <div className="absolute top-[2px] right-px h-[535px] w-[3px] rounded-full bg-[#929292]" />
          </div>
        </div>
      </div>
    </div>
  );
}
